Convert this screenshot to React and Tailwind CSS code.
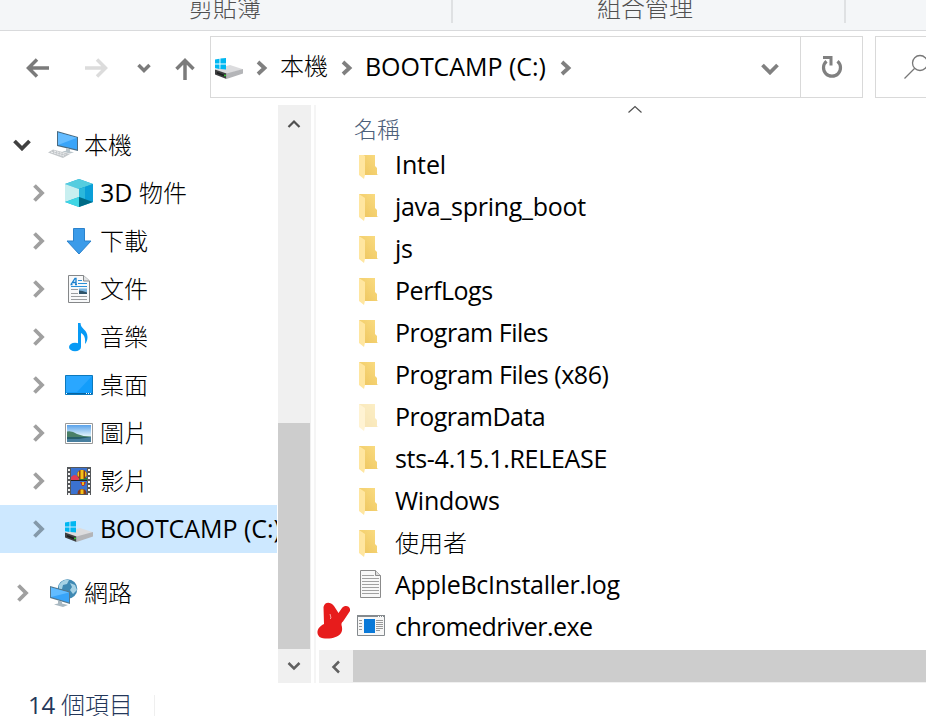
import React from "react";

const FONT = "font-['Open_Sans','Noto_Sans_CJK_TC',sans-serif]";
const CJK = "font-['Noto_Sans_CJK_TC',sans-serif] text-[24px] leading-8 font-light";

function Chevron({ dir = "right", className = "text-[#a0a0a0]" }) {
  const down = dir === "down";
  return (
    <svg width={down ? 20 : 12} height={down ? 12 : 20} viewBox={down ? "0 0 20 12" : "0 0 12 20"} className={className} fill="none" stroke="currentColor" strokeWidth="3.8">
      <path d={down ? "M2.500 2 10 9.500 17.500 2" : "M1.500 2.500 9 10 1.500 17.500"} />
    </svg>
  );
}

function SmallChevron() {
  return (
    <svg width="12" height="18" viewBox="0 0 12 18" className="text-[#808080]" fill="none" stroke="currentColor" strokeWidth="3.8">
      <path d="M2 3 8.500 9 2 15" />
    </svg>
  );
}

function Drive() {
  return (
    <svg width="28" height="22" viewBox="0 0 28 22">
      <path d="M0 11.500 15 7l13 4.300-16.500 5z" fill="#dcdcde" />
      <path d="M0 11.500 11.500 15.500v5.500L0 16.500z" fill="#3d3f40" />
      <path d="M11.500 15.500 28 11v4.500L11.500 21z" fill="#b4b5b8" />
      <path d="M2 14.800 9 17.500" stroke="#1c1d1e" strokeWidth="1.500" />
      <rect x="9" y="16.700" width="2" height="1.500" fill="#2fc22f" />
      <path d="M0 1.400 4.500.8v4.700H0zM5.400.6 11 0v5.500H5.400zM0 6.400h4.500v4.500L0 10.300zM5.400 6.400H11v5.200l-5.600-.6z" fill="#00b7f1" />
    </svg>
  );
}

function NavDrive() {
  return <div className="pt-[5px]"><Drive /></div>;
}

function Computer() {
  return (
    <svg width="30" height="28" viewBox="0 0 30 28">
      <path d="m9 0 21 6v14L9 15z" fill="#4a6a80" />
      <path d="m10 1.500 19 5.300v11.600L10 14z" fill="#39a4f8" />
      <path d="m10 1.500 19 5.300L10 14z" fill="#65bcff" />
      <path d="m18 17 4 1v2.500l4 .7-4 1.300-8-2 4-.8z" fill="#b9c4ca" />
      <path d="m5 18.500 17 4.500-7 4L0 21.500z" fill="#c3c7ca" />
      <path d="m3 21 13 4M6 20l12 3.500" stroke="#f3f4f5" strokeDasharray="2 1" />
    </svg>
  );
}

function Cube() {
  return (
    <svg width="28" height="28" viewBox="0 0 28 28">
      <path d="M0 5 14 0l14 5v18l-14 5L0 23z" fill="#13a6d8" />
      <path d="M0 5 14 0l14 5-14 5z" fill="#55cddf" />
      <path d="M0 5 14 10v8L0 23z" fill="#c8eff0" />
      <path d="m14 10 14-5v18l-14-5z" fill="#0b9fd8" />
      <path d="m14 10 6-2v12L14 18z" fill="#2bb8dc" />
      <path d="m0 23 14-5v10z" fill="#3fd6e4" />
      <path d="m14 18 14 5-14 5z" fill="#006b86" />
    </svg>
  );
}

function Download() {
  return (
    <svg width="26" height="27" viewBox="0 0 26 27">
      <path d="M7.500.5h11v12.500h6.500L13 26 1 13h6.500z" fill="#3b9be9" stroke="#2b82cc" />
    </svg>
  );
}

function Doc() {
  return (
    <svg width="22" height="28" viewBox="0 0 22 28">
      <path d="M.5.5h15l6 5.500v21.500H.5z" fill="#f8f9fa" stroke="#858789" />
      <path d="M15.500.5V6h6" fill="#e1e4e6" stroke="#858789" />
      <path d="M3 9.500 7 3.500h1v6M5 7.500h3M2.500 9.500h2M7 9.500h2" fill="none" stroke="#1b80ce" strokeWidth="1.300" />
      <path d="M10 5.500h4M10 8.500h9M3 11.500h16" stroke="#2b91d8" strokeWidth="1.200" />
      <path d="M3 14.500h7M3 18.500h7M3 21.500h16M3 24.500h16" stroke="#9a9da0" />
      <path d="M11 13.500h8v5.500h-8z" fill="#79b2dc" />
      <path d="M11 15.500q3 0 8 2V19h-8z" fill="#2e536a" />
    </svg>
  );
}

function Music() {
  return (
    <svg width="20" height="29" viewBox="0 0 20 29">
      <ellipse cx="6" cy="24" rx="6" ry="4.300" fill="#079af5" />
      <path d="M9 0h2.500c0 6 7 6.500 7 14 0 3-1 5.500-2.500 7 .8-6-1-9.500-4-11v14H9z" fill="#079af5" />
    </svg>
  );
}

function Desktop() {
  return (
    <svg width="28" height="20" viewBox="0 0 28 20">
      <path d="M.5.5h27v19H.5z" fill="#139dfb" stroke="#0c79bd" />
      <path d="M1 1h26L12 17H1z" fill="#2aa7ff" />
      <path d="M1 18.500h26" stroke="#07639f" />
      <path d="M1 18.500h2M21 18.500h6" stroke="#fff" strokeDasharray="1 1" />
    </svg>
  );
}

function Picture() {
  return (
    <svg width="28" height="21" viewBox="0 0 28 21">
      <defs>
        <linearGradient id="sky" x1="0" y1="0" x2="0" y2="1">
          <stop offset="0" stopColor="#5aa2ea" />
          <stop offset="0.6" stopColor="#d9eefa" />
        </linearGradient>
      </defs>
      <path d="M.5.5h27v20H.5z" fill="#fff" stroke="#999" />
      <path d="M2 2h24v17H2z" fill="url(#sky)" />
      <path d="M2 8.500q5-1 10 2.500 6 2.500 14 2.500v1H2z" fill="#4a8067" />
      <path d="M2 14h24v5H2z" fill="#487f9f" />
      <path d="M2 14h24l-12 2H2z" fill="#275f6a" />
    </svg>
  );
}

function Film() {
  return (
    <svg width="24" height="28" viewBox="0 0 24 28">
      <path d="M0 0h24v28H0z" fill="#54575a" />
      <path d="M2 2v26M22 2v26" stroke="#f1f1f1" strokeWidth="2" strokeDasharray="2 2" />
      <path d="M4 1h16v12H4zM4 14h16v13H4z" fill="#3b72cf" />
      <path d="M4 10q4-4 7 0l4 1v2H4z" fill="#df3d56" />
      <path d="M12 11h8v2h-8z" fill="#227e3e" />
      <ellipse cx="15" cy="7.500" rx="4.800" ry="4.800" fill="#8b3a16" />
      <path d="M13.500 3h3v9h-3zM10.500 6l1.500-2v6l-1.500-1.500zM18 4l1.500 2v3L18 10z" fill="#f2c21a" />
      <path d="M13 15h6l-2 4h-2z" fill="#bd3324" />
      <path d="M15 15h2v3h-2z" fill="#edbd1b" />
      <path d="M10.500 27q0-5 4.500-5t4.500 5z" fill="#8b3a16" />
      <path d="M13.500 22.500h3V27h-3z" fill="#f2c21a" />
      <path d="M4 13.500h16" stroke="#222" />
    </svg>
  );
}

function Network() {
  return (
    <svg width="28" height="28" viewBox="0 0 28 28">
      <circle cx="17.500" cy="10" r="9.800" fill="#3f89b3" />
      <path d="M9 6q4-6 10-5l-2 4-4 1-1 4H9zM20 4l5 2 2 5-4 4-3-4 2-3z" fill="#a6d2e5" />
      <path d="m0 7 20 5.500V25L0 19z" fill="#55798f" />
      <path d="m1 8.500 18 5v10L1 18z" fill="#38a4f9" />
      <path d="m1 8.500 18 5L1 18z" fill="#62bcff" />
      <path d="m8 21.500 4 1v2l6 1.500-5 2-9-2.500 4-1z" fill="#a9b8c1" />
    </svg>
  );
}

function Folder({ faded }) {
  return (
    <svg width="20" height="27" viewBox="0 0 20 27" className={faded ? "opacity-45" : ""}>
      <defs>
        <linearGradient id="back" x1="0" y1="1" x2="1" y2="0">
          <stop offset="0" stopColor="#edc45c" />
          <stop offset="1" stopColor="#fadc82" />
        </linearGradient>
      </defs>
      <path d="M0 0h16v14l2 2v7H3z" fill="url(#back)" />
      <path d="M0 0 6 4v18.500l-1 4.500-5-4z" fill="#ffe6a0" />
      <path d="M18 22v1h1.500z" fill="#f6dfa5" />
    </svg>
  );
}

function LogFile() {
  return (
    <svg width="22" height="28" viewBox="0 0 22 28">
      <path d="M.5.5h15l5 5v22H.5z" fill="#f8f8f8" stroke="#8b8b8b" />
      <path d="M15.500.5v5h5" fill="#ddd" stroke="#8b8b8b" />
      <path d="M2 5.500h12M2 8.500h17M2 11.500h17M2 14.500h17M2 17.500h17M2 20.500h17M2 23.500h17" stroke="#a1a1a1" />
    </svg>
  );
}

function Exe() {
  return (
    <svg width="28" height="21" viewBox="0 0 28 21">
      <path d="M.5.5h27v20H.5z" fill="#f7f7f7" stroke="#858a8e" />
      <path d="M0 1h28" stroke="#858a8e" strokeWidth="2" />
      <path d="M21 1.500h6" stroke="#fff" strokeDasharray="1 1" />
      <path d="M7 4h11v14H7z" fill="#0a79d8" />
      <path d="M2 5.500h3M2 8.500h3M2 11.500h3M2 14.500h3M19 5.500h7M19 7.500h7M19 9.500h7M19 11.500h7M19 13.500h7M19 15.500h4" stroke="#999" />
    </svg>
  );
}

const places = [
  [Cube, "3D 物件"],
  [Download, "下載"],
  [Doc, "文件"],
  [Music, "音樂"],
  [Desktop, "桌面"],
  [Picture, "圖片"],
  [Film, "影片"],
];

const files = [
  ["Intel", "tracking-[-0.1px]"],
  ["java_spring_boot", "tracking-[-0.29px]"],
  ["js", "tracking-[-0.3px]"],
  ["PerfLogs", "tracking-[-0.45px]"],
  ["Program Files", "tracking-[-0.48px]"],
  ["Program Files (x86)", "tracking-[-0.45px]"],
  ["ProgramData", "tracking-[-0.53px]"],
  ["sts-4.15.1.RELEASE", "tracking-[-0.29px]"],
  ["Windows", "tracking-[-0.25px]"],
  ["使用者", CJK],
  ["AppleBcInstaller.log", "tracking-[-0.27px]"],
  ["chromedriver.exe", "tracking-[-0.53px]"],
];

function NavRow({ icon: Icon, label, root, open, selected }) {
  return (
    <div className={`flex h-12 w-[277px] shrink-0 items-center overflow-hidden whitespace-nowrap ${root ? "pl-3" : "pl-[33px]"} ${selected ? "bg-[#cde8ff]" : ""}`}>
      <div className={`flex shrink-0 ${root ? "w-[36px]" : "w-[31px]"} ${root && !open ? "pl-[5px]" : ""}`}>
        {open ? <Chevron dir="down" className="text-[#404040]" /> : <Chevron className={selected ? "text-[#8499aa]" : "text-[#a0a0a0]"} />}
      </div>
      <div className={`flex w-[30px] shrink-0 ${root ? "" : "justify-center"} ${root && !open ? "pl-[2px]" : ""}`}><Icon /></div>
      <span className="ml-[6px]">{label}</span>
    </div>
  );
}

function NavText({ children }) {
  return <span className={`block pb-[3px] ${CJK}`}>{children}</span>;
}

export default function App() {
  return (
    <div className={`flex h-[720px] w-[926px] flex-col overflow-hidden bg-white text-[25px] leading-8 text-black ${FONT}`}>
      <div className="flex h-[31px] shrink-0 overflow-hidden border-b border-[#d9dadc] bg-[#f4f6f8] text-[#505050]">
        <div className="h-[23px] w-[453px] border-r-2 border-[#dfe1e3] pl-[189px]">
          <div className={`-mt-[9px] whitespace-nowrap ${CJK}`}>剪貼簿</div>
        </div>
        <div className="h-[23px] w-[393px] border-r-2 border-[#dfe1e3] pl-[144px]">
          <div className={`-mt-[9px] whitespace-nowrap ${CJK}`}>組合管理</div>
        </div>
      </div>

      <div className="flex h-[74px] shrink-0 pt-[5px]">
        <div className="flex h-[62px] w-[210px] shrink-0 items-center pl-[26px]">
          <svg width="170" height="26" viewBox="0 0 170 26" fill="none" strokeWidth="3.500">
            <path d="M23 14H2M11 5.500 2.500 14l8.500 8.500" stroke="#7b7b7b" />
            <path d="M59 14h21M71 5.500 79.500 14 71 22.500" stroke="#dcdcdc" />
            <path d="m112.500 11 5.500 5.500 5.500-5.500" stroke="#7b7b7b" />
            <path d="M159 27V6M150.500 15 159 6.500l8.500 8.500" stroke="#7b7b7b" />
          </svg>
        </div>
        <div className="flex h-[62px] w-[653px] shrink-0 border border-[#d9d9d9]">
          <div className="flex w-[589px] items-center whitespace-nowrap pl-1">
            <div className="shrink-0 pt-1"><Drive /></div>
            <div className="ml-[13px] w-3 shrink-0 pt-[2px]"><SmallChevron /></div>
            <span className={`ml-[12px] w-12 shrink-0 pb-[5px] ${CJK}`}>本機</span>
            <div className="ml-[13px] w-3 shrink-0 pt-[2px]"><SmallChevron /></div>
            <span className="ml-[12px] w-[182px] shrink-0 pb-[3px] tracking-[-0.05px]">BOOTCAMP (C:)</span>
            <div className="ml-[13px] w-3 shrink-0 pt-[2px]"><SmallChevron /></div>
            <div className="ml-auto mr-[20px] pt-1"><Chevron dir="down" className="text-[#808080]" /></div>
          </div>
          <div className="flex flex-1 items-center justify-center border-l border-[#d9d9d9]">
            <svg width="22" height="24" viewBox="0 0 22 24" fill="none" stroke="#808080">
              <path d="M5.500 6.200A8.500 8.500 0 1 0 16.500 6.200" strokeWidth="3.200" />
              <path d="M2 2.500h8v8" strokeWidth="3" />
            </svg>
          </div>
        </div>
        <div className="ml-3 flex h-[62px] flex-1 items-center overflow-hidden border border-r-0 border-[#d9d9d9] pl-7">
          <svg width="26" height="26" viewBox="0 0 26 26" className="shrink-0" fill="none" stroke="#777" strokeWidth="1.300">
            <circle cx="16" cy="9" r="7.500" />
            <path d="M10.500 14.500.5 24.500" />
          </svg>
        </div>
      </div>

      <div className="flex h-[578px] shrink-0">
        <div className="flex w-[278px] shrink-0 flex-col pt-4">
          <NavRow icon={Computer} label={<NavText>本機</NavText>} root open />
          {places.map(([icon, label]) => (
            <NavRow key={label} icon={icon} label={label.startsWith("3D") ? <span className="block pb-[2px]">3D <span className={CJK}>物件</span></span> : <NavText>{label}</NavText>} />
          ))}
          <NavRow icon={NavDrive} label={<span className="block pb-[2px] tracking-[-0.05px]">BOOTCAMP (C:)</span>} selected />
          <div className="h-4 shrink-0" />
          <NavRow icon={Network} label={<NavText>網路</NavText>} root />
        </div>
        <div className="flex w-[33px] shrink-0 flex-col bg-[#f0f0f0]">
          <div className="flex h-[318px] w-8 justify-center pt-[13px]">
            <svg width="14" height="12" viewBox="0 0 14 12" fill="none" stroke="#505050" strokeWidth="2.200"><path d="m1.500 9 5.500-5.500L12.500 9" /></svg>
          </div>
          <div className="h-[226px] w-8 bg-[#cdcdcd]" />
          <div className="flex w-8 flex-1 items-center justify-center">
            <svg width="14" height="12" viewBox="0 0 14 12" fill="none" stroke="#606060" strokeWidth="2.500"><path d="m1.500 3 5.500 5.500L12.500 3" /></svg>
          </div>
        </div>
        <div className="ml-[3px] w-[2px] shrink-0 bg-[#f5f5f5]" />
        <div className="relative flex min-w-0 flex-1 flex-col">
          <div className="flex h-[50px] shrink-0 pl-[38px] text-[#4c607a]">
            <span className="w-[274px] pt-[7px] font-['Noto_Sans_CJK_TC',sans-serif] text-[23px] font-light">名稱</span>
            <svg width="14" height="10" viewBox="0 0 14 10" fill="none" stroke="#505050" strokeWidth="1.200"><path d="m.5 7.500 6.500-6 6.500 6" /></svg>
          </div>
          <div className="h-[495px] shrink-0 overflow-hidden">
            <div className="-mt-[11px] flex flex-col">
              {files.map(([name, cls]) => (
                <div key={name} className="flex h-[42px] items-center whitespace-nowrap pl-[41px]">
                  <div className="flex w-[28px] shrink-0 justify-center">
                    {name.endsWith(".log") ? <div className="pb-[2px]"><LogFile /></div> : name.endsWith(".exe") ? <div className="pb-1"><Exe /></div> : <div className="w-6"><Folder faded={name === "ProgramData"} /></div>}
                  </div>
                  <span className={`ml-[10px] pb-[2px] ${cls}`}>{name}</span>
                </div>
              ))}
            </div>
          </div>
          <div className="ml-[3px] flex h-[33px] shrink-0 bg-[#f0f0f0]">
            <div className="flex w-[34px] items-center justify-center">
              <svg width="12" height="14" viewBox="0 0 12 14" fill="none" stroke="#606060" strokeWidth="2.500"><path d="M9 1.500 3.500 7 9 12.500" /></svg>
            </div>
            <div className="h-8 flex-1 bg-[#cdcdcd]" />
          </div>
          <svg width="34" height="38" viewBox="0 0 34 38" className="absolute left-0 top-[497px]">
            <path d="M7.500 5C8.500 0 14-1 18 4l4.500 7 3.500-5c3.500-4 9-1.500 8 3l-6 9c-2 3-2.500 2-2.500 5 2 7-1 10-6 12-5 2-12 2-16 0-4-4-2-10 4.500-13Z" fill="#e71c1c" />
            <path d="m14 12 1 4-1 1" fill="none" stroke="#f7a0a0" />
          </svg>
        </div>
      </div>

      <div className="flex h-[33px] shrink-0 overflow-hidden pl-[28px] text-[#24375a]">
        <span className="w-[126px] whitespace-nowrap pt-[5px] text-[24px] tracking-[-0.2px]">14 <span className={CJK}>個項目</span></span>
        <div className="mt-3 w-px bg-[#efefef]" />
      </div>
    </div>
  );
}
